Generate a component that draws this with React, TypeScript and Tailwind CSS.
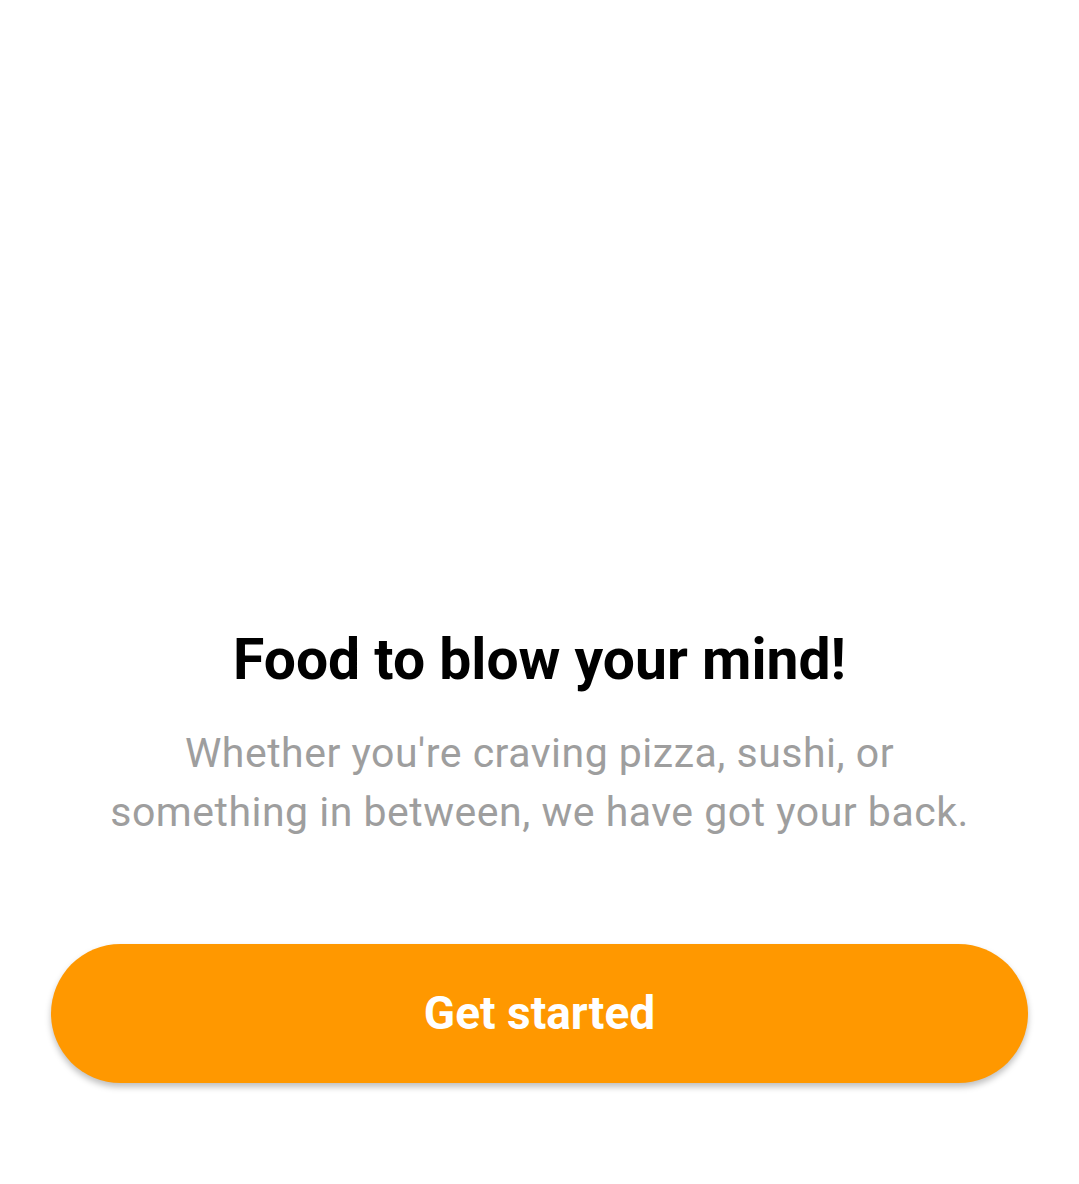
import React from 'react';

const App: React.FC = () => {
    return (
        <div
            className="w-full h-[1184px] bg-white flex flex-col justify-end pb-[101px]"
            style={{ fontFamily: 'Roboto, "Noto Sans", sans-serif' }}
        >
            {/* Texto */}
            <div className="flex flex-col items-center text-center px-[40px]">
                <h1 className="text-[57px] leading-[60px] font-bold text-black">
                    Food to blow your mind!
                </h1>
                <p className="mt-[34px] text-[41px] leading-[59px] text-[#9e9e9e] tracking-[0.5px]">
                    Whether you're craving pizza, sushi, or
                    <br />
                    something in between, we have got your back.
                </p>
            </div>

            {/* Botão */}
            <button className="mt-[102px] mx-[51px] h-[139px] rounded-full bg-[#ff9800] text-white text-[46px] font-bold shadow-[0_4px_6px_rgba(0,0,0,0.25)]">
                Get started
            </button>
        </div>
    );
};

export default App;
